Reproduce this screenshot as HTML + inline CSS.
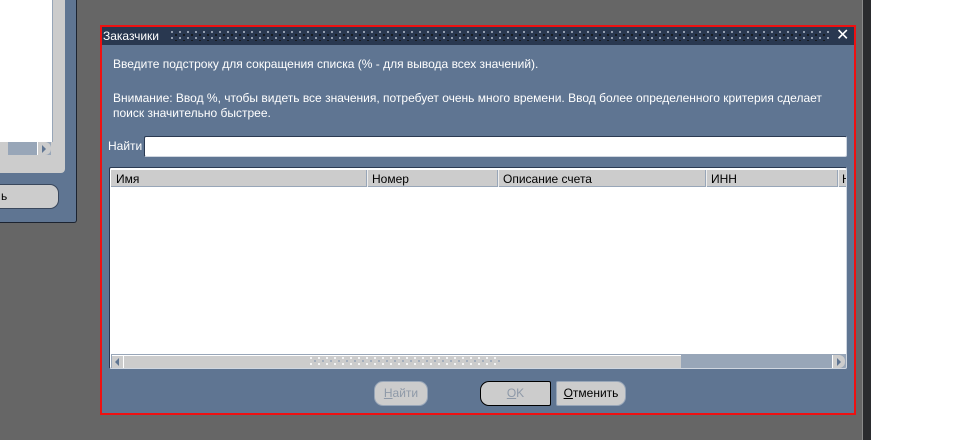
<!DOCTYPE html>
<html><head><meta charset="utf-8"><style>
*{margin:0;padding:0;box-sizing:border-box}
body{width:955px;height:440px;overflow:hidden;background:#fff;position:relative;font-family:"Liberation Sans","DejaVu Sans",sans-serif;font-size:12px}
.a{position:absolute}
.dots{background-image:radial-gradient(circle at 1px 1px,#aeb8c6 0.8px,transparent 1.1px),radial-gradient(circle at 1px 1px,#111 0.8px,transparent 1.1px);background-size:8px 6px,8px 6px;background-position:0 0,4px 3px}
.btn{position:absolute;height:25px;border-radius:9px;background:#cccccc;border:1px solid #39475c;font-size:12px;text-align:center;line-height:23px;color:#000}
</style></head><body>
<div class="a" style="left:0;top:0;width:863px;height:440px;background:#666"></div>
<div class="a" style="left:862px;top:0;width:1px;height:440px;background:#8a8a8a"></div>
<div class="a" style="left:863px;top:0;width:8px;height:440px;background:#2a2b2e"></div>
<div class="a" style="left:0;top:0;width:77px;height:223px;background:#5f7592;border-right:1px solid #1c2330;border-bottom:1px solid #1c2330;border-bottom-right-radius:3px"></div>
<div class="a" style="left:0;top:0;width:65px;height:173px;background:#cccccc;border-bottom-right-radius:4px"></div>
<div class="a" style="left:0;top:0;width:53px;height:142px;background:#fff;border-right:1px solid #98a6b8"></div>
<div class="a" style="left:0;top:142px;width:51px;height:13px;background:#98a6b8"></div>
<div class="a" style="left:0;top:142px;width:8px;height:13px;background:#cccccc"></div>
<div class="a" style="left:37px;top:142px;width:14px;height:13px;background:#cccccc;border-radius:0 6px 6px 0;border-left:1px solid #fff"></div>
<div class="a" style="left:42px;top:145px;width:0;height:0;border-top:4px solid transparent;border-bottom:4px solid transparent;border-left:4px solid #5f7592"></div>
<div class="btn" style="left:-20px;top:184px;width:79px;text-align:left;padding-left:20px">ь</div>
<div class="a" style="left:100px;top:25px;width:756px;height:390px;border:2px solid #ee1111;background:#5f7592"></div>
<div class="a" style="left:102px;top:27px;width:752px;height:18px;background:#293850"></div>
<div class="a dots" style="left:171px;top:31px;width:659px;height:10px"></div>
<div class="a" style="left:103px;top:28px;color:#fff;font-size:12px;line-height:16px">Заказчики</div>
<div class="a" style="left:836px;top:27px;color:#fff;font-size:16px;line-height:18px;font-weight:bold">✕</div>
<div class="a" style="left:113px;top:57px;color:#fff;line-height:15px">Введите подстроку для сокращения списка (% - для вывода всех значений).</div>
<div class="a" style="left:113px;top:91px;color:#fff;line-height:15px;width:740px">Внимание: Ввод %, чтобы видеть все значения, потребует очень много времени. Ввод более определенного критерия сделает<br>поиск значительно быстрее.</div>
<div class="a" style="left:108px;top:139px;color:#fff;line-height:15px">Найти</div>
<div class="a" style="left:144px;top:136px;width:703px;height:21px;background:#fff;border:1px solid #2b3a52;border-right-color:#cfd6e0;border-bottom-color:#cfd6e0;border-radius:2px"></div>
<div class="a" style="left:109px;top:167px;width:738px;height:202px;background:#fff;border:1px solid #2b3a52;border-right-color:#cfd6e0;border-bottom-color:#cfd6e0;border-radius:2px;overflow:hidden">
 <div class="a" style="left:1px;top:2px;width:736px;height:17px;background:#cccccc;border-bottom:1px solid #98a6b8"></div>
 <div class="a" style="left:6px;top:4px;line-height:15px">Имя</div>
 <div class="a" style="left:256px;top:2px;width:2px;height:17px;background:#eee;border-left:1px solid #98a6b8"></div>
 <div class="a" style="left:262px;top:4px;line-height:15px">Номер</div>
 <div class="a" style="left:387px;top:2px;width:2px;height:17px;background:#eee;border-left:1px solid #98a6b8"></div>
 <div class="a" style="left:393px;top:4px;line-height:15px">Описание счета</div>
 <div class="a" style="left:595px;top:2px;width:2px;height:17px;background:#eee;border-left:1px solid #98a6b8"></div>
 <div class="a" style="left:601px;top:4px;line-height:15px">ИНН</div>
 <div class="a" style="left:727px;top:2px;width:2px;height:17px;background:#eee;border-left:1px solid #98a6b8"></div>
 <div class="a" style="left:732px;top:4px;line-height:15px">Н</div>
 <div class="a" style="left:1px;top:186px;width:736px;height:14px;background:#98a6b8;border-top:1px solid #98a6b8"></div>
 <div class="a" style="left:2px;top:187px;width:569px;height:13px;background:#cccccc;border-top:1px solid #fff"></div>
 <div class="a dots" style="left:200px;top:189px;width:190px;height:9px;background-image:radial-gradient(circle at 1px 1px,#fff 0.8px,transparent 1.1px),radial-gradient(circle at 1px 1px,#98a6b8 0.8px,transparent 1.1px)"></div>
 <div class="a" style="left:2px;top:187px;width:12px;height:13px;border-right:1px solid #fff;border-radius:6px 0 0 6px"></div>
 <div class="a" style="left:5px;top:190px;width:0;height:0;border-top:4px solid transparent;border-bottom:4px solid transparent;border-right:4px solid #5f7592"></div>
 <div class="a" style="left:722px;top:187px;width:13px;height:13px;background:#cccccc;border-left:1px solid #fff;border-radius:0 6px 6px 0"></div>
 <div class="a" style="left:727px;top:190px;width:0;height:0;border-top:4px solid transparent;border-bottom:4px solid transparent;border-left:4px solid #5f7592"></div>
</div>
<div class="btn" style="left:374px;top:381px;width:54px;border-color:#98a6b8;color:#8e99a8"><u>Н</u>айти</div>
<div class="btn" style="left:480px;top:381px;width:71px;border-radius:9px 2px 2px 9px;border:1px solid #000;color:#8e99a8"><u>O</u>K</div>
<div class="btn" style="left:556px;top:381px;width:70px;border-radius:2px 9px 9px 2px;border-color:#98a6b8"><u>О</u>тменить</div>
</body></html>
